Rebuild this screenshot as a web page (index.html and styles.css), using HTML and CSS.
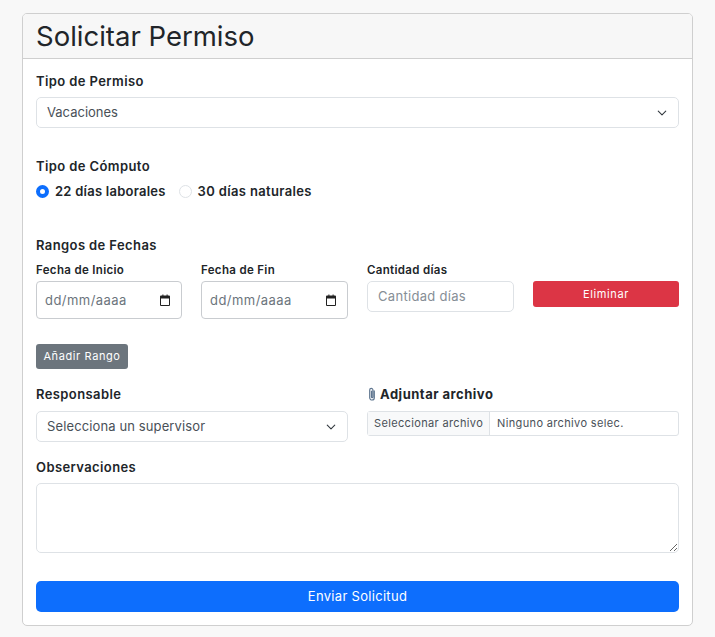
FILE: index.html
```html
<!DOCTYPE html>
<html lang="es">
<head>
<meta charset="utf-8">
<title>Solicitar Permiso</title>
<link rel="stylesheet" href="styles.css">
</head>
<body>
<main class="card">
  <header class="card-header"><h1>Solicitar Permiso</h1></header>
  <form class="card-body">
    <label class="label label-first">Tipo de Permiso</label>
    <div class="select"><span>Vacaciones</span>
      <svg class="chev" viewBox="0 0 16 16"><path d="m2 5 6 6 6-6" fill="none" stroke="#343a40" stroke-width="1.800" stroke-linecap="round" stroke-linejoin="round"/></svg>
    </div>

    <div class="label label-computo">Tipo de Cómputo</div>
    <div class="radios">
      <label class="radio radio-first"><span class="dot dot-on"></span>22 días laborales</label>
      <label class="radio"><span class="dot"></span>30 días naturales</label>
    </div>

    <div class="label label-rangos">Rangos de Fechas</div>
    <div class="range">
      <div>
        <div class="sublabel">Fecha de Inicio</div>
        <div class="date"><span>dd/mm/aaaa</span>
          <svg class="cal" viewBox="0 0 12 12"><path fill="#222" d="M2 1.500h1.400V.5h1v1h3.200v-1h1v1H10a1 1 0 0 1 1 1V11a1 1 0 0 1-1 1H2a1 1 0 0 1-1-1V2.500a1 1 0 0 1 1-1Zm0 3V11h8V4.500Z"/></svg>
        </div>
      </div>
      <div>
        <div class="sublabel">Fecha de Fin</div>
        <div class="date"><span>dd/mm/aaaa</span>
          <svg class="cal" viewBox="0 0 12 12"><path fill="#222" d="M2 1.500h1.400V.5h1v1h3.200v-1h1v1H10a1 1 0 0 1 1 1V11a1 1 0 0 1-1 1H2a1 1 0 0 1-1-1V2.500a1 1 0 0 1 1-1Zm0 3V11h8V4.500Z"/></svg>
        </div>
      </div>
      <div>
        <div class="sublabel">Cantidad días</div>
        <input class="qty" type="text" placeholder="Cantidad días">
      </div>
      <div class="remove-cell"><button type="button" class="btn-remove">Eliminar</button></div>
    </div>

    <button type="button" class="btn-add">Añadir Rango</button>

    <div class="two-col">
      <div>
        <div class="label label-tight">Responsable</div>
        <div class="select select-long"><span>Selecciona un supervisor</span>
          <svg class="chev" viewBox="0 0 16 16"><path d="m2 5 6 6 6-6" fill="none" stroke="#343a40" stroke-width="1.800" stroke-linecap="round" stroke-linejoin="round"/></svg>
        </div>
      </div>
      <div>
        <div class="label label-tight label-attach">
          <svg class="clip" viewBox="0 0 8 14"><path d="M6.300 3.500v7.200a2.300 2.300 0 0 1-4.600 0V3a1.600 1.600 0 0 1 3.200 0v7a.7.7 0 0 1-1.400 0V3.800" fill="none" stroke="#5f7690" stroke-width="1.200"/></svg>Adjuntar archivo
        </div>
        <div class="file"><span class="file-btn">Seleccionar archivo</span><span class="file-name">Ninguno archivo selec.</span></div>
      </div>
    </div>

    <div class="label label-obs">Observaciones</div>
    <textarea class="notes"></textarea>

    <button type="button" class="btn-submit">Enviar Solicitud</button>
  </form>
</main>
</body>
</html>
```

FILE: styles.css
```css
* { box-sizing: border-box; }

html, body { margin: 0; }

body {
  background: #f8f8f8;
  padding: 13px 22px 11px;
  font-family: Inter, "Noto Sans", sans-serif;
  font-size: 13px;
  color: #212529;
}

.card {
  background: #fff;
  border: 1px solid #cfcfcf;
  border-radius: 5px;
  overflow: hidden;
}

.card-header {
  height: 45px;
  padding: 0 13px;
  background: #f7f7f7;
  border-bottom: 1px solid #cfcfcf;
  display: flex;
  align-items: center;
}

h1 {
  margin: 0;
  font-size: 27.500px;
  font-weight: 400;
  color: #212529;
}

.card-body {
  display: flex;
  flex-direction: column;
  padding: 14px 13px 13px;
}

.label {
  display: block;
  font-size: 13px;
  font-weight: 600;
  line-height: 16px;
  letter-spacing: .4px;
}

.label-first { margin-bottom: 8px; }
.label-computo { margin-top: 30px; margin-bottom: 9px; }
.label-rangos { margin-top: 38px; margin-bottom: 10px; }
.label-tight { margin-bottom: 9px; }
.label-obs { margin-top: 17px; margin-bottom: 8px; }

.label-attach { display: flex; align-items: center; gap: 3px; letter-spacing: .5px; font-weight: 700; }

.clip { width: 10px; height: 14px; }

.select {
  height: 31px;
  display: flex;
  align-items: center;
  justify-content: space-between;
  padding: 0 11px 1px 10px;
  background: #fff;
  border: 1px solid #dee2e6;
  border-radius: 5px;
  font-size: 13px;
  color: #495057;
}

.select-long { letter-spacing: .12px; }

.chev { width: 10px; height: 10px; margin-top: 1px; }

.radios {
  display: flex;
  gap: 13px;
  height: 16px;
}

.radio {
  display: flex;
  align-items: center;
  gap: 6px;
  font-size: 13px;
  font-weight: 600;
  letter-spacing: .35px;
}

.radio-first { letter-spacing: .24px; }

.dot {
  width: 13px;
  height: 13px;
  border-radius: 50%;
  border: 1px solid #dee2e6;
  background: #fff;
}

.dot-on { border: 4px solid #0d6efd; }

.range {
  display: grid;
  grid-template-columns: 146px 147px 147px 146px;
  column-gap: 19px;
  align-items: start;
}

.sublabel {
  font-size: 11.500px;
  font-weight: 600;
  line-height: 14px;
  letter-spacing: .33px;
  margin-bottom: 4px;
}

.date {
  height: 38px;
  display: flex;
  align-items: center;
  justify-content: space-between;
  padding: 0 10px 0 8px;
  border: 1px solid #c9ccd0;
  border-radius: 4px;
  color: #6c757d;
  font-size: 13px;
  letter-spacing: .45px;
}

.cal { width: 12px; height: 12px; }

.qty {
  display: block;
  width: 100%;
  height: 31px;
  padding: 0 10px 1px;
  border: 1px solid #dee2e6;
  border-radius: 5px;
  font: inherit;
  font-size: 13px;
  letter-spacing: .3px;
}

.qty::placeholder { color: #868e96; opacity: 1; }

.remove-cell { padding-top: 18px; }

.btn-remove {
  display: block;
  width: 100%;
  height: 26px;
  padding: 0;
  border: 0;
  border-radius: 3px;
  background: #dc3545;
  color: #fff;
  font: inherit;
  font-size: 11px;
  letter-spacing: .6px;
}

.btn-add {
  align-self: flex-start;
  width: 92px;
  height: 25px;
  margin-top: 25px;
  padding: 0 0 1px;
  border: 0;
  border-radius: 3px;
  background: #6c757d;
  color: #fff;
  font: inherit;
  font-size: 11px;
  letter-spacing: .6px;
}

.two-col {
  display: grid;
  grid-template-columns: 1fr 1fr;
  column-gap: 19px;
  margin-top: 17px;
}

.file {
  height: 25px;
  display: flex;
  align-items: center;
  border: 1px solid #dee2e6;
  border-radius: 3px;
  font-size: 11px;
  letter-spacing: .35px;
  color: #495057;
}

.file-btn {
  height: 100%;
  display: flex;
  align-items: center;
  padding: 0 6px 1px;
  background: #f8f9fa;
  border-right: 1px solid #dee2e6;
}

.file-name { padding: 0 0 1px 7px; }

.notes {
  display: block;
  width: 100%;
  height: 70px;
  border: 1px solid #dee2e6;
  border-radius: 5px;
  background: #fff;
}

.btn-submit {
  height: 31px;
  margin-top: 28px;
  padding: 0 0 1px;
  border: 0;
  border-radius: 5px;
  background: #0d6efd;
  color: #fff;
  font: inherit;
  font-size: 13px;
  letter-spacing: .3px;
}
```
